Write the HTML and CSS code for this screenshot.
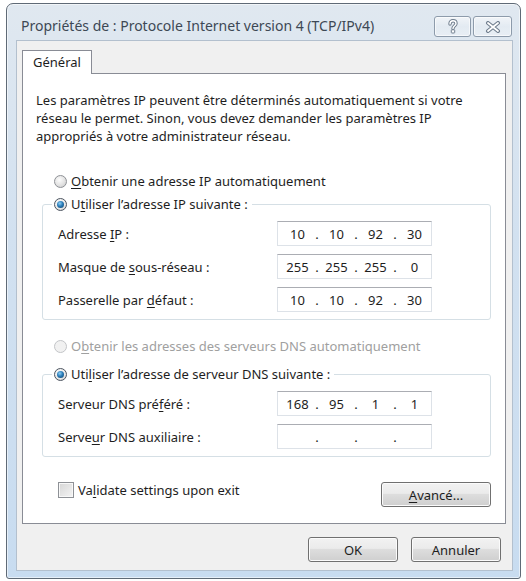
FILE: index.html
```html
<!DOCTYPE html>
<html>
<head>
	<meta charset="utf-8">
	<title>Propriétés de : Protocole Internet version 4 (TCP/IPv4)</title>
	<link rel="stylesheet" href="styles.css">
</head>
<body>
	<div class="window">
		<div class="titlebar">
			<span class="title">Propriétés de : Protocole Internet version 4 (TCP/IPv4)</span>
			<div class="caption">
				<button class="cap-btn help" type="button" title="Aide">
					<svg width="12" height="15" viewBox="0 0 12 15">
						<path d="M3 5 C3 2.6 4.4 1.8 6 1.8 C7.8 1.8 9 2.9 9 4.4 C9 6.6 6 6.8 6 9.4" fill="none" stroke="#6f7d8d" stroke-width="3.4" stroke-linecap="round"/>
						<path d="M3 5 C3 2.6 4.4 1.8 6 1.8 C7.8 1.8 9 2.9 9 4.4 C9 6.6 6 6.8 6 9.4" fill="none" stroke="#fff" stroke-width="1.4" stroke-linecap="round"/>
						<rect x="4.3" y="10.8" width="3.4" height="3.2" rx="0.6" fill="#fff" stroke="#6f7d8d" stroke-width="1"/>
					</svg>
				</button>
				<button class="cap-btn close" type="button" title="Fermer">
					<svg width="16" height="12" viewBox="0 0 16 12">
						<path d="M3 2 L13 10 M13 2 L3 10" fill="none" stroke="#6f7d8d" stroke-width="4" stroke-linecap="round"/>
						<path d="M3 2 L13 10 M13 2 L3 10" fill="none" stroke="#fff" stroke-width="1.8" stroke-linecap="round"/>
					</svg>
				</button>
			</div>
		</div>

		<div class="client">
			<div class="tabs">
				<div class="tab">Général</div>
			</div>

			<div class="panel">
				<p class="intro">Les paramètres IP peuvent être déterminés automatiquement si votre<br>
				réseau le permet. Sinon, vous devez demander les paramètres IP<br>
				appropriés à votre administrateur réseau.</p>

				<div class="option first">
					<span class="radio"></span>
					<span><u>O</u>btenir une adresse IP automatiquement</span>
				</div>

				<fieldset class="group">
					<legend>
						<span class="option">
							<span class="radio on"></span>
							<span>U<u>t</u>iliser l’adresse IP suivante :</span>
						</span>
					</legend>
					<div class="row">
						<label>Adresse <u>I</u>P :</label>
						<div class="ip"><span>10</span><i>.</i><span>10</span><i>.</i><span>92</span><i>.</i><span>30</span></div>
					</div>
					<div class="row">
						<label>Masque de <u>s</u>ous-réseau :</label>
						<div class="ip"><span>255</span><i>.</i><span>255</span><i>.</i><span>255</span><i>.</i><span>0</span></div>
					</div>
					<div class="row">
						<label>Passerelle par <u>d</u>éfaut :</label>
						<div class="ip"><span>10</span><i>.</i><span>10</span><i>.</i><span>92</span><i>.</i><span>30</span></div>
					</div>
				</fieldset>

				<div class="option disabled">
					<span class="radio"></span>
					<span>O<u>b</u>tenir les adresses des serveurs DNS automatiquement</span>
				</div>

				<fieldset class="group second">
					<legend>
						<span class="option">
							<span class="radio on"></span>
							<span>Uti<u>l</u>iser l’adresse de serveur DNS suivante :</span>
						</span>
					</legend>
					<div class="row">
						<label>Serveur DNS pré<u>f</u>éré :</label>
						<div class="ip"><span>168</span><i>.</i><span>95</span><i>.</i><span>1</span><i>.</i><span>1</span></div>
					</div>
					<div class="row">
						<label>Serve<u>u</u>r DNS auxiliaire :</label>
						<div class="ip"><span></span><i>.</i><span></span><i>.</i><span></span><i>.</i><span></span></div>
					</div>
				</fieldset>

				<div class="footer">
					<div class="check-line">
						<span class="checkbox"></span>
						<span>Va<u>l</u>idate settings upon exit</span>
					</div>
					<button class="btn advanced" type="button"><u>A</u>vancé...</button>
				</div>
			</div>

			<div class="actions">
				<button class="btn" type="button">OK</button>
				<button class="btn" type="button">Annuler</button>
			</div>
		</div>
	</div>
</body>
</html>
```

FILE: styles.css
```css
body {
	margin: 0;
	background-color: #fff;
	font-family: "Noto Sans", "Open Sans", sans-serif;
	font-size: 13px;
	color: #1e1e1e;
}

u {
	text-decoration-thickness: 1px;
	text-underline-offset: 2px;
}

/* cadre de la fenetre */
.window {
	box-sizing: border-box;
	width: 515px;
	height: 576px;
	margin: 3px 0 0 6px;
	padding: 0 7px 7px 9px;
	border: 1px solid #5f6a76;
	border-radius: 7px 7px 3px 3px;
	background: linear-gradient(#e0e8f0, #d2e1f0 40%, #c8dcf0);
	box-shadow: inset 0 0 0 1px rgba(255, 255, 255, 0.55);
	display: flex;
	flex-direction: column;
}

.titlebar {
	height: 36px;
	box-sizing: border-box;
	padding-top: 12px;
	display: flex;
	align-items: flex-start;
}

.title {
	flex: 1;
	padding-left: 5px;
	font-size: 14px;
	line-height: 20px;
	color: #3d4855;
}

.caption {
	display: flex;
	gap: 2px;
	margin-right: 1px;
}

.cap-btn {
	height: 21px;
	padding: 0;
	border: 1px solid #8d9bab;
	border-radius: 3px;
	background: linear-gradient(rgba(255, 255, 255, 0.55), rgba(255, 255, 255, 0.15) 50%, rgba(255, 255, 255, 0.3));
	box-shadow: inset 0 0 0 1px rgba(255, 255, 255, 0.6);
	display: flex;
	align-items: center;
	justify-content: center;
}

.help  { width: 37px; }
.close { width: 39px; }

/* zone client */
.client {
	flex: 1;
	padding: 9px 6px 8px 5px;
	border: 1px solid #b3c0ce;
	background-color: #f0f0f0;
	display: flex;
	flex-direction: column;
}

.tabs {
	display: flex;
}

.tab {
	position: relative;
	z-index: 1;
	height: 23px;
	margin-bottom: -1px;
	padding: 0 10px;
	border: 1px solid #898c95;
	border-bottom: none;
	background-color: #fff;
	line-height: 22px;
}

.panel {
	padding: 17px 14px 16px 0;
	border: 1px solid #898c95;
	background-color: #fff;
}

.intro {
	margin: 0;
	padding-left: 13px;
	line-height: 18px;
}

.option {
	display: flex;
	align-items: center;
	gap: 4px;
	line-height: 16px;
}

.option.first {
	margin: 28px 0 0 31px;
}

.option.disabled {
	margin: 18px 0 0 31px;
	color: #a0a0a0;
}

.radio {
	box-sizing: border-box;
	width: 13px;
	height: 13px;
	border: 1px solid #8e9196;
	border-radius: 50%;
	background: radial-gradient(circle at 40% 35%, #fdfdfd, #e2e2e2 55%, #c8c8c8);
	display: flex;
	align-items: center;
	justify-content: center;
}

.radio.on {
	border-color: #4d5560;
	background: radial-gradient(circle at 40% 35%, #fff, #e8e8e8 60%, #bcbcbc);
}

.radio.on::after {
	content: "";
	width: 7px;
	height: 7px;
	border-radius: 50%;
	background: radial-gradient(circle at 40% 35%, #8fd0f6, #2a7cb8 45%, #0f3f66);
}

.disabled .radio {
	border-color: #c3c5c8;
	background: #f1f1f1;
}

/* cadres de groupe */
.group {
	margin: 7px 0 0 19px;
	padding: 9px 0 7px 15px;
	border: 1px solid #d5dfe5;
	border-radius: 3px;
	display: flex;
	flex-direction: column;
	gap: 8px;
}

.group.second {
	margin-top: 12px;
}

.group legend {
	margin-left: -6px;
	padding: 0 4px 0 2px;
}

.row {
	display: flex;
	align-items: center;
}

.row label {
	width: 219px;
}

.ip {
	box-sizing: border-box;
	width: 155px;
	height: 25px;
	padding-left: 4px;
	border: 1px solid #dde2e8;
	border-top-color: #abadb3;
	background-color: #fff;
	display: flex;
	align-items: center;
}

.ip span {
	width: 31px;
	text-align: center;
}

.ip i {
	width: 8px;
	font-style: normal;
	text-align: center;
}

.footer {
	margin-top: 25px;
	padding-left: 35px;
	display: flex;
	justify-content: space-between;
	align-items: flex-start;
}

.check-line {
	display: flex;
	align-items: center;
	gap: 4px;
	height: 16px;
}

.checkbox {
	box-sizing: border-box;
	width: 16px;
	height: 16px;
	border: 1px solid #8e9196;
	background: linear-gradient(135deg, #d6d6d6, #f4f4f4);
	box-shadow: inset 0 0 0 1px #f8f8f8;
}

.btn {
	box-sizing: border-box;
	width: 90px;
	height: 25px;
	padding: 0;
	border: 1px solid #707070;
	border-radius: 3px;
	background: linear-gradient(#f2f2f2, #ebebeb 45%, #dddddd 50%, #cfcfcf);
	box-shadow: inset 0 0 0 1px #fbfbfb;
	font-family: inherit;
	font-size: 13px;
	color: #1e1e1e;
}

.btn.advanced {
	width: 110px;
}

.actions {
	margin-top: 13px;
	display: flex;
	justify-content: flex-end;
	gap: 13px;
	padding-right: 5px;
}
```
